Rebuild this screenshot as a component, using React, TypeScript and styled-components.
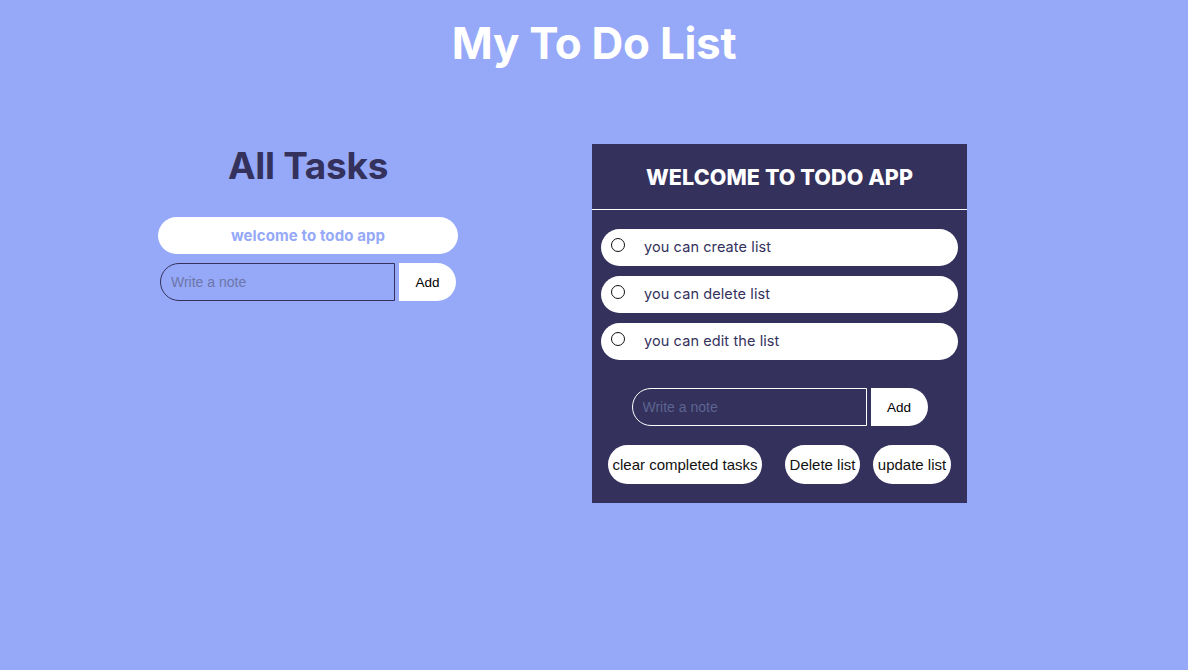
import React from "react";
import styled, { createGlobalStyle } from "styled-components";

const Global = createGlobalStyle`
  html, body { margin: 0; padding: 0; }
  body {
    background: #95a9f8;
    font-family: "Inter", "Noto Sans", sans-serif;
    min-height: 670px;
  }
`;

const Page = styled.div`
  width: 1188px;
  min-height: 670px;
  background: #95a9f8;
`;

const Title = styled.h1`
  margin: 0;
  padding-top: 17px;
  text-align: center;
  color: #ffffff;
  font-family: "Inter", sans-serif;
  font-weight: 700;
  font-size: 44px;
  line-height: 52px;
  letter-spacing: -0.3px;
`;

const Columns = styled.div`
  display: flex;
  align-items: flex-start;
  padding-left: 158px;
  gap: 134px;
  margin-top: 75px;
`;

const Left = styled.div`
  width: 300px;
  display: flex;
  flex-direction: column;
  align-items: center;
`;

const SubTitle = styled.h2`
  margin: 0;
  color: #34315c;
  font-family: "Inter", sans-serif;
  font-weight: 700;
  font-size: 37px;
  line-height: 44px;
  letter-spacing: -0.3px;
`;

const WelcomePill = styled.div`
  margin-top: 29px;
  width: 300px;
  height: 37px;
  border-radius: 19px;
  background: #ffffff;
  color: #95a9f8;
  font-weight: 700;
  font-size: 15px;
  letter-spacing: 0.1px;
  display: flex;
  align-items: center;
  justify-content: center;
  padding-bottom: 1px;
  box-sizing: border-box;
`;

const NoteRow = styled.div<{ $top: number }>`
  display: flex;
  gap: 4px;
  margin-top: ${(p) => p.$top}px;
`;

const NoteInput = styled.input<{ $dark?: boolean }>`
  box-sizing: border-box;
  width: 235px;
  height: 38px;
  border: 1px solid ${(p) => (p.$dark ? "#ffffff" : "#34315c")};
  border-radius: 20px 0 0 20px;
  background: transparent;
  padding: 0 10px;
  font-family: "Liberation Sans", Arial, sans-serif;
  font-size: 14px;
  outline: none;
  &::placeholder {
    color: ${(p) => (p.$dark ? "#5c6591" : "#6d76a8")};
  }
`;

const AddButton = styled.button`
  width: 57px;
  height: 38px;
  border: none;
  border-radius: 0 20px 20px 0;
  background: #ffffff;
  color: #000;
  font-family: "Liberation Sans", Arial, sans-serif;
  font-size: 13.5px;
  padding: 0;
`;

const Panel = styled.div`
  width: 375px;
  background: #34315c;
  display: flex;
  flex-direction: column;
  padding-bottom: 19px;
`;

const PanelHeader = styled.div`
  height: 65px;
  border-bottom: 1px solid #ffffff;
  display: flex;
  align-items: center;
  justify-content: center;
  color: #ffffff;
  font-weight: 800;
  font-size: 21.5px;
  letter-spacing: 0.1px;
`;

const TaskList = styled.div`
  display: flex;
  flex-direction: column;
  gap: 10px;
  padding: 19px 9px 0;
`;

const TaskItem = styled.label`
  height: 37px;
  border-radius: 19px;
  background: #ffffff;
  display: flex;
  align-items: center;
  color: #34315c;
  font-size: 14.5px;
  letter-spacing: 0.1px;
  span {
    margin-left: 19px;
    padding-bottom: 2px;
  }
`;

const Radio = styled.input`
  appearance: none;
  box-sizing: border-box;
  margin: 0 0 5px 10px;
  width: 14px;
  height: 14px;
  border: 1px solid #111;
  border-radius: 50%;
  background: #fff;
`;

const CenterRow = styled.div`
  display: flex;
  justify-content: center;
`;

const ActionRow = styled.div`
  display: flex;
  margin-top: 19px;
  padding-left: 16px;
`;

const Pill = styled.button<{ $ml: number; $w: number }>`
  margin-left: ${(p) => p.$ml}px;
  width: ${(p) => p.$w}px;
  height: 39px;
  border: none;
  border-radius: 20px;
  background: #ffffff;
  color: #111;
  font-family: "Liberation Sans", Arial, sans-serif;
  font-size: 15px;
  padding: 0;
  white-space: nowrap;
`;

const tasks = ["you can create list", "you can delete list", "you can edit the list"];

export default function App() {
  return (
    <Page>
      <Global />
      <Title>My To Do List</Title>
      <Columns>
        <Left>
          <SubTitle>All Tasks</SubTitle>
          <WelcomePill>welcome to todo app</WelcomePill>
          <NoteRow $top={9}>
            <NoteInput placeholder="Write a note" />
            <AddButton>Add</AddButton>
          </NoteRow>
        </Left>
        <Panel>
          <PanelHeader>WELCOME TO TODO APP</PanelHeader>
          <TaskList>
            {tasks.map((t) => (
              <TaskItem key={t}>
                <Radio type="radio" name="task" />
                <span>{t}</span>
              </TaskItem>
            ))}
          </TaskList>
          <CenterRow>
            <NoteRow $top={28}>
              <NoteInput $dark placeholder="Write a note" />
              <AddButton>Add</AddButton>
            </NoteRow>
          </CenterRow>
          <ActionRow>
            <Pill $ml={0} $w={154}>clear completed tasks</Pill>
            <Pill $ml={23} $w={75}>Delete list</Pill>
            <Pill $ml={13} $w={78}>update list</Pill>
          </ActionRow>
        </Panel>
      </Columns>
    </Page>
  );
}
